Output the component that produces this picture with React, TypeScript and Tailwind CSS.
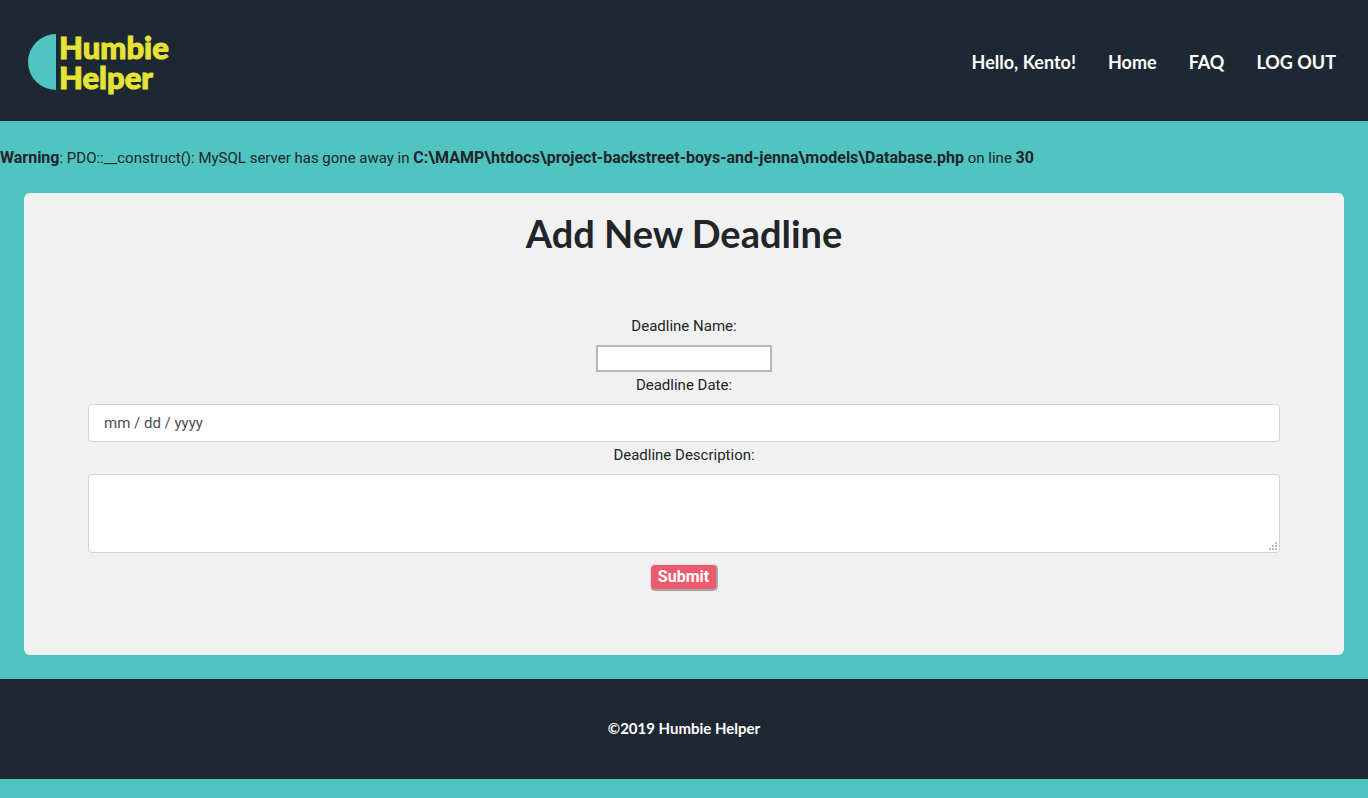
const navLinks = ["Home", "FAQ", "LOG OUT"];

const gripDots = [
  [6, 0],
  [3, 3],
  [6, 3],
  [0, 6],
  [3, 6],
  [6, 6],
];

function Logo() {
  return (
    <a href="#" className="flex items-center gap-[3px]">
      <svg width="28" height="56" viewBox="0 0 28 56" aria-hidden="true">
        <path d="M28 0A28 28 0 0 0 28 56Z" fill="#4fc4c1" />
      </svg>
      <span className="font-[Lato,sans-serif] text-[31px] leading-[30px] font-black text-[#e6e334] [-webkit-text-stroke:1px_#e6e334]">
        Humbie
        <br />
        Helper
      </span>
    </a>
  );
}

function Header() {
  return (
    <header className="flex items-center justify-between bg-[#1e2833] px-7 pt-8 pb-[29px]">
      <Logo />
      <nav className="flex gap-8 pr-1 font-[Lato,sans-serif] text-[18px] leading-7 font-bold text-white">
        <span>Hello, Kento!</span>
        {navLinks.map((label) => (
          <a key={label} href="#">
            {label}
          </a>
        ))}
      </nav>
    </header>
  );
}

function FieldLabel({ htmlFor, children }: { htmlFor: string; children: string }) {
  return (
    <label htmlFor={htmlFor} className="mb-1.5 text-[15px] leading-[26px]">
      {children}
    </label>
  );
}

function DeadlineForm() {
  return (
    <form className="flex flex-col items-center px-10" onSubmit={(e) => e.preventDefault()}>
      <FieldLabel htmlFor="name">Deadline Name:</FieldLabel>
      <input
        id="name"
        type="text"
        className="h-[27px] w-44 border-2 border-[#b8b8b8] bg-white px-1"
      />
      <FieldLabel htmlFor="date">Deadline Date:</FieldLabel>
      <input
        id="date"
        type="text"
        placeholder="mm / dd / yyyy"
        className="h-[38px] w-full rounded border border-[#ced4da] bg-white px-[15px] text-[15px] placeholder:text-[#495057]"
      />
      <FieldLabel htmlFor="description">Deadline Description:</FieldLabel>
      <div className="relative w-full">
        <textarea
          id="description"
          className="block h-[79px] w-full resize-none rounded border border-[#ced4da] bg-white px-3 py-1.5"
        />
        <svg
          width="8"
          height="8"
          viewBox="0 0 8 8"
          aria-hidden="true"
          className="absolute right-[3px] bottom-[3px]"
        >
          {gripDots.map(([x, y]) => (
            <rect key={`${x}-${y}`} x={x} y={y} width="2" height="2" fill="#bcbcbc" />
          ))}
        </svg>
      </div>
      <button
        type="submit"
        className="mt-[11px] h-[27px] rounded-[5px] border border-t-[#e3e3e3] border-r-2 border-r-[#a5a5a5] border-b-2 border-b-[#a5a5a5] border-l-[#e3e3e3] bg-[#ed5a6e] px-[7px] leading-6 font-bold text-white"
      >
        Submit
      </button>
    </form>
  );
}

export default function App() {
  return (
    <div className="min-h-screen bg-[#4fc4c1] font-[Roboto,sans-serif] text-[16px] leading-6 text-[#212529]">
      <Header />
      <p className="pt-[25px] text-[15px] leading-6 [&>b]:text-[16px]">
        <b>Warning</b>: PDO::__construct(): MySQL server has gone away in{" "}
        <b>C:\MAMP\htdocs\project-backstreet-boys-and-jenna\models\Database.php</b> on line <b>30</b>
      </p>
      <main className="mx-6 mt-[23px] mb-6 rounded-md bg-[#f1f1f1] px-6 pt-4 pb-16">
        <h1 className="mb-14 text-center font-[Lato,sans-serif] text-[38px] leading-12 font-bold">
          Add New Deadline
        </h1>
        <DeadlineForm />
      </main>
      <footer className="flex h-[100px] items-center justify-center bg-[#1e2833] pb-0.5 font-[Lato,sans-serif] text-[15px] font-bold text-white">
        ©2019 Humbie Helper
      </footer>
    </div>
  );
}
